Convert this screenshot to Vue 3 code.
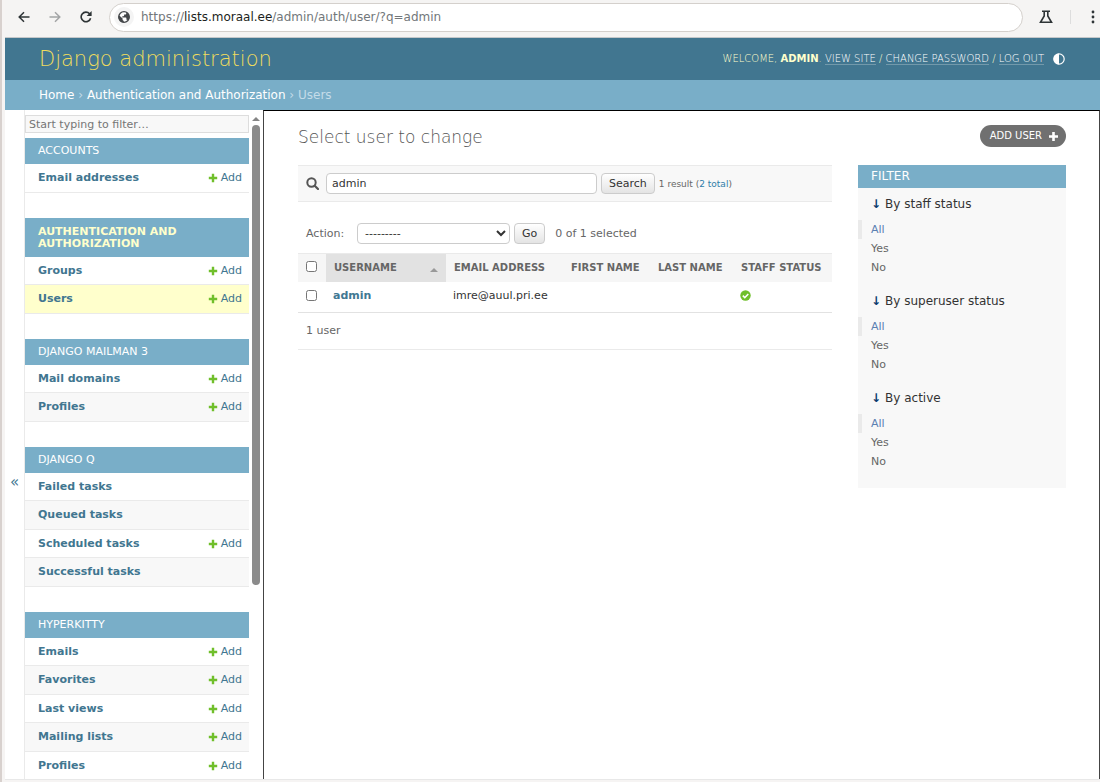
<script setup>
import { ref } from 'vue'

const query = ref('admin')
const navFilter = ref('')
const action = ref('')

const groups = [
  { name: 'Accounts', items: [{ name: 'Email addresses', add: true }] },
  {
    name: 'Authentication and Authorization',
    current: true,
    items: [
      { name: 'Groups', add: true },
      { name: 'Users', add: true, current: true },
    ],
  },
  {
    name: 'Django Mailman 3',
    items: [
      { name: 'Mail domains', add: true },
      { name: 'Profiles', add: true },
    ],
  },
  {
    name: 'Django Q',
    items: [
      { name: 'Failed tasks' },
      { name: 'Queued tasks' },
      { name: 'Scheduled tasks', add: true },
      { name: 'Successful tasks' },
    ],
  },
  {
    name: 'HyperKitty',
    items: [
      { name: 'Emails', add: true },
      { name: 'Favorites', add: true },
      { name: 'Last views', add: true },
      { name: 'Mailing lists', add: true },
      { name: 'Profiles', add: true },
    ],
  },
]

const filters = ['By staff status', 'By superuser status', 'By active']
const choices = ['All', 'Yes', 'No']
</script>

<template>
  <div class="window">
    <div class="toolbar">
      <button class="tool" type="button" aria-label="Back">
        <svg width="12" height="12" viewBox="0 0 12 12"><path d="M11.5 6H1.2M6 1.2 1.2 6 6 10.8" fill="none" stroke="#2e3436" stroke-width="1.5" /></svg>
      </button>
      <button class="tool" type="button" aria-label="Forward">
        <svg width="12" height="12" viewBox="0 0 12 12"><path d="M.5 6h10.3M6 1.2 10.8 6 6 10.8" fill="none" stroke="#a3a5a6" stroke-width="1.5" /></svg>
      </button>
      <button class="tool" type="button" aria-label="Reload">
        <svg width="12" height="12" viewBox="0 0 12 12"><path d="M10.6 7.2A4.8 4.8 0 1 1 9.6 2.8L10.6 4" fill="none" stroke="#2e3436" stroke-width="1.6" /><path d="M11.6 0v5H6.6Z" fill="#2e3436" /></svg>
      </button>
      <div class="address">
        <span class="globe">
          <svg width="12" height="12" viewBox="0 0 12 12"><circle cx="6" cy="6" r="5.3" fill="#fff" stroke="#44474a" stroke-width="1.3" /><path d="M1 4.2 4.6 7.6V9l1.2 1v1.4C3 11.6.6 9.4.6 6ZM7.8.9C10 1.6 11.4 3.7 11.4 6c0 1.3-.5 2.6-1.3 3.5-.2-.5-.6-.8-1.1-.8h-.6V7c0-.3-.2-.6-.6-.6H4.3V5.2h1.2c.3 0 .6-.3.6-.6V3.5h1.1c.6 0 1.1-.5 1.1-1.1Z" fill="#44474a" /></svg>
        </span>
        <span class="url">https://<b>lists.moraal.ee</b>/admin/auth/user/?q=admin</span>
      </div>
      <button class="tool flask" type="button" aria-label="Experiments">
        <svg width="14" height="14" viewBox="0 0 14 14"><path d="M3 1.2h8M5.2 1.2V6L1.5 12.3h11L8.8 6V1.2" fill="none" stroke="#2e3436" stroke-width="1.6" /></svg>
      </button>
      <span class="divider"></span>
      <button class="tool menu" type="button" aria-label="Menu">
        <svg width="4" height="14" viewBox="0 0 4 14" fill="#2e3436"><circle cx="2" cy="2" r="1.4" /><circle cx="2" cy="7" r="1.4" /><circle cx="2" cy="12" r="1.4" /></svg>
      </button>
    </div>

    <header class="header">
      <a class="brand" href="#">Django administration</a>
      <div class="usertools">
        <span>Welcome, <strong>admin</strong>.
          <a href="#">View site</a> / <a href="#">Change password</a> / <a href="#">Log out</a></span>
        <button class="theme" type="button" aria-label="Toggle theme">
          <svg width="12" height="12" viewBox="0 0 12 12"><circle cx="6" cy="6" r="5.2" fill="none" stroke="#fff" stroke-width="1.2" /><path d="M6 .6a5.4 5.4 0 0 0 0 10.8Z" fill="#fff" /></svg>
        </button>
      </div>
    </header>

    <nav class="crumbs" aria-label="Breadcrumbs">
      <a href="#">Home</a> › <a href="#">Authentication and Authorization</a> › Users
    </nav>

    <div class="body">
      <button class="collapse" type="button" aria-label="Toggle navigation">«</button>
      <nav class="sidebar" aria-label="Sidebar">
        <input v-model="navFilter" class="navfilter" type="search" placeholder="Start typing to filter…" aria-label="Filter navigation items">
        <section v-for="g in groups" :key="g.name" class="group">
          <h2 :class="{ current: g.current }"><a href="#">{{ g.name }}</a></h2>
          <div v-for="i in g.items" :key="i.name" class="item" :class="{ current: i.current }">
            <a class="model" href="#">{{ i.name }}</a>
            <a v-if="i.add" class="add" href="#">
              <svg width="10" height="10" viewBox="0 0 10 10"><path d="M5 .8v8.4M.8 5h8.4" stroke="#70bf2b" stroke-width="2.4" /></svg>Add</a>
          </div>
        </section>
      </nav>
      <div class="scroll" aria-hidden="true">
        <svg width="8" height="5" viewBox="0 0 8 5"><path d="M0 5 4 1l4 4Z" fill="#858585" /></svg>
        <div class="thumb"></div>
      </div>

      <main class="main">
        <div class="titlebar">
          <h1>Select user to change</h1>
          <a class="adduser" href="#">Add user
            <svg width="9" height="9" viewBox="0 0 9 9"><path d="M4.5 0v9M0 4.5h9" stroke="#fff" stroke-width="2.6" /></svg></a>
        </div>
        <div class="columns">
          <div class="changelist">
            <form class="search" @submit.prevent>
              <label for="searchbar" aria-label="Search">
                <svg width="13" height="13" viewBox="0 0 13 13"><circle cx="5.5" cy="5.5" r="4.2" fill="none" stroke="#555" stroke-width="2" /><path d="m8.7 8.7 3.300 3.300" stroke="#555" stroke-width="2.2" stroke-linecap="round" /></svg>
              </label>
              <input id="searchbar" v-model="query" type="text">
              <button type="submit">Search</button>
              <span class="count">1 result (<a href="#">2 total</a>)</span>
            </form>
            <form class="actions" @submit.prevent>
              <label for="action">Action:</label>
              <select id="action" v-model="action">
                <option value="">---------</option>
                <option value="delete">Delete selected users</option>
              </select>
              <button type="submit">Go</button>
              <span class="picked">0 of 1 selected</span>
            </form>
            <table>
              <thead>
                <tr>
                  <th class="check"><input type="checkbox" aria-label="Select all users"></th>
                  <th class="sorted"><div><a href="#">Username</a><svg width="8" height="4" viewBox="0 0 8 4"><path d="M0 4 4 0l4 4Z" fill="#999" /></svg></div></th>
                  <th class="email"><a href="#">Email address</a></th>
                  <th class="first"><a href="#">First name</a></th>
                  <th class="last"><a href="#">Last name</a></th>
                  <th><a href="#">Staff status</a></th>
                </tr>
              </thead>
              <tbody>
                <tr>
                  <td class="check"><input type="checkbox" aria-label="Select admin"></td>
                  <td><a class="user" href="#">admin</a></td>
                  <td>imre@auul.pri.ee</td>
                  <td></td>
                  <td></td>
                  <td><svg role="img" aria-label="True" width="11" height="11" viewBox="0 0 11 11"><circle cx="5.5" cy="5.5" r="5.2" fill="#70bf2b" /><path d="m2.8 5.6 2 2 3.5-3.6" fill="none" stroke="#fff" stroke-width="1.5" /></svg></td>
                </tr>
              </tbody>
            </table>
            <p class="paginator">1 user</p>
          </div>

          <aside class="filter">
            <h2>Filter</h2>
            <details v-for="f in filters" :key="f" open>
              <summary>{{ f }}</summary>
              <ul>
                <li v-for="(c, n) in choices" :key="c" :class="{ selected: n === 0 }"><a href="#">{{ c }}</a></li>
              </ul>
            </details>
          </aside>
        </div>
      </main>
    </div>
  </div>
</template>

<style>
body {
  background: #fff;
}
</style>

<style scoped>
* {
  box-sizing: border-box;
}

.window {
  display: flex;
  flex-direction: column;
  height: 100vh;
  overflow: hidden;
  padding: 0 0 2px 3px;
  border-left: 2px solid #d8d1ce;
  background: #f6f4f3;
  color: #333;
  font: 12px/16px "DejaVu Sans", sans-serif;
}

a {
  color: inherit;
  text-decoration: none;
}

button,
input,
select {
  font: inherit;
  color: inherit;
}

button {
  cursor: pointer;
}

svg {
  flex: none;
}

.toolbar {
  display: flex;
  flex: none;
  align-items: center;
  height: 38px;
  padding: 0 5px 3px 11px;
  background: #f5f4f3;
  border-bottom: 1px solid #c5c8ca;
}

.tool {
  display: flex;
  justify-content: center;
  width: 15px;
  margin-right: 16px;
  padding: 0;
  border: 0;
  background: none;
}

.address {
  display: flex;
  flex: 1;
  align-items: center;
  gap: 7px;
  height: 29px;
  padding: 0 4px;
  border: 1px solid #d4d0cc;
  border-radius: 15px;
  background: #fff;
}

.globe {
  display: flex;
  align-items: center;
  justify-content: center;
  width: 20px;
  height: 20px;
  border-radius: 50%;
  background: #f4f4f4;
}

.url {
  color: #72777a;
}

.url b {
  color: #1c1f21;
  font-weight: 400;
}

.flask {
  margin: 0 0 0 15px;
}

.divider {
  width: 1px;
  height: 14px;
  margin: 0 20px 0 17px;
  background: #ddd;
}

.menu {
  width: 4px;
  margin: 0;
}

.header {
  display: flex;
  flex: none;
  align-items: center;
  justify-content: space-between;
  height: 42px;
  padding: 0 35px 0 34px;
  background: #417690;
  color: #ffc;
}

.brand {
  color: #f0dd5d;
  font-size: 21px;
  font-weight: 200;
  line-height: 28px;
}

.usertools {
  display: flex;
  align-items: center;
  gap: 9px;
  font-size: 10px;
  font-weight: 200;
  text-transform: uppercase;
}

.usertools strong {
  font-weight: 700;
}

.usertools a {
  border-bottom: 1px solid #7299ab;
  color: #fff;
}

.theme {
  display: flex;
  padding: 0;
  border: 0;
  background: none;
}

.crumbs {
  flex: none;
  height: 30px;
  padding: 7px 34px;
  background: #79aec8;
  color: #c4dce8;
}

.crumbs a {
  color: #fff;
}

.body {
  display: flex;
  flex: 1;
  min-height: 0;
  border-bottom: 1px solid #e8e8e8;
  background: #fff;
}

.collapse {
  flex: none;
  width: 19px;
  padding: 74px 0 0;
  border: 0;
  background: #fff;
  color: #417690;
  font-size: 15px;
}

.sidebar {
  flex: none;
  width: 225px;
  overflow: hidden;
  padding-top: 5px;
  border-left: 1px solid #eaeaea;
}

.navfilter {
  display: block;
  width: 100%;
  height: 18px;
  margin: 0 0 5px;
  padding: 0 3px;
  border: 1px solid #ddd;
  border-radius: 0;
  outline: 0;
  appearance: none;
  background: #f8f8f8;
  font-size: 11px;
}

.navfilter::placeholder {
  color: #757575;
  opacity: 1;
}

.group {
  margin-bottom: 25px;
}

.group h2 {
  margin: 0;
  padding: 7px 13px;
  background: #79aec8;
  color: #fff;
  font-size: 11px;
  font-weight: 400;
  line-height: 12px;
  text-transform: uppercase;
}

.group h2.current {
  padding: 8px 13px 7px;
  color: #ffc;
  font-weight: 700;
}

.item {
  display: flex;
  align-items: center;
  justify-content: space-between;
  height: 28px;
  padding: 0 7px 0 13px;
  border-bottom: 1px solid #eaeaea;
  color: #417690;
  font-size: 11px;
}

.item:nth-of-type(even) {
  background: #f8f8f8;
}

.item:nth-of-type(even),
.item:last-child {
  height: 29px;
}

.item.current {
  background: #ffc;
}

.model {
  font-weight: 700;
}

.add {
  display: flex;
  align-items: center;
  gap: 3px;
}

.scroll {
  display: flex;
  flex: none;
  flex-direction: column;
  align-items: center;
  gap: 4px;
  width: 14px;
  padding-top: 6px;
}

.thumb {
  width: 8px;
  height: 460px;
  border-radius: 4px;
  background: #8b8b8b;
}

.main {
  flex: 1;
  min-width: 0;
  padding: 14px 33px 0 34px;
  border: 1px solid #444;
  border-top-color: #000;
  border-bottom: 0;
}

.titlebar {
  display: flex;
  align-items: flex-start;
  justify-content: space-between;
  height: 40px;
}

h1 {
  margin: 0;
  color: #555;
  font-size: 17px;
  font-weight: 200;
  line-height: 25px;
}

.adduser {
  display: flex;
  align-items: center;
  gap: 7px;
  height: 22px;
  padding: 0 8px 0 10px;
  border-radius: 11px;
  background: #707070;
  color: #fff;
  font-size: 10px;
  text-transform: uppercase;
}

.columns {
  display: flex;
  align-items: flex-start;
  gap: 26px;
}

.changelist {
  flex: 1;
  min-width: 0;
  color: #666;
}

.search {
  display: flex;
  align-items: center;
  gap: 4px;
  height: 37px;
  padding: 0 8px;
  border: solid #eaeaea;
  border-width: 1px 0;
  background: #f8f8f8;
}

.search label {
  display: flex;
  width: 16px;
}

.search input {
  width: 271px;
  height: 21px;
  padding: 0 5px;
  border: 1px solid #ccc;
  border-radius: 4px;
  background: #fff;
  color: #333;
  font-size: 11px;
}

.changelist button {
  height: 21px;
  padding: 0 7px;
  border: 1px solid #ccc;
  border-radius: 4px;
  background: linear-gradient(#fff, #e4e4e4);
  color: #333;
  font-size: 11px;
}

.count {
  font-size: 9px;
}

.count a {
  color: #2f7da8;
}

.actions {
  display: flex;
  align-items: center;
  gap: 4px;
  padding: 21px 8px 9px;
  font-size: 11px;
}

.actions label {
  width: 47px;
}

.actions select {
  width: 153px;
  height: 21px;
  padding: 0 3px;
  border: 1px solid #ccc;
  border-radius: 4px;
  background: #fff;
  color: #333;
  font-size: 11px;
}

.picked {
  margin-left: 6px;
}

table {
  width: 100%;
  border-collapse: collapse;
  table-layout: fixed;
}

th {
  height: 28px;
  padding: 0 8px;
  border-top: 1px solid #eaeaea;
  background: #f6f6f6;
  color: #666;
  font-size: 10px;
  text-align: left;
  text-transform: uppercase;
  white-space: nowrap;
}

th div {
  display: flex;
  align-items: center;
  justify-content: space-between;
}

th svg {
  margin-top: 4px;
}

td {
  height: 31px;
  padding: 0 7px 2px;
  border-bottom: 1px solid #e2e2e2;
  color: #333;
  font-size: 11px;
}

td svg {
  display: block;
}

.check {
  width: 28px;
  padding: 0 8px 2px;
}

.check input {
  display: block;
  width: 11px;
  height: 11px;
  margin: 0;
}

.sorted {
  width: 120px;
  background: #e2e2e2;
}

.email {
  width: 117px;
}

.first {
  width: 87px;
}

.last {
  width: 83px;
}

.user {
  color: #417893;
  font-weight: 700;
}

.paginator {
  margin: 0;
  padding: 10px 8px;
  border-bottom: 1px solid #eaeaea;
  font-size: 11px;
}

.filter {
  flex: none;
  width: 208px;
  padding-bottom: 9px;
  background: #f8f8f8;
}

.filter h2 {
  margin: 0;
  padding: 3px 13px 4px;
  background: #79aec8;
  color: #fff;
  font-size: 12px;
  font-weight: 400;
  text-transform: uppercase;
}

summary {
  padding: 8px 13px;
  list-style: none;
  font-size: 12px;
}

summary::before {
  content: "↓";
  margin-right: 4px;
  color: #0c3c6e;
  font-weight: 700;
}

.filter ul {
  margin: 0;
  padding: 0 0 8px;
  list-style: none;
}

.filter li {
  height: 19px;
  padding-left: 13px;
  color: #666;
  font-size: 11px;
  line-height: 19px;
}

.filter .selected {
  padding-left: 9px;
  border-left: 4px solid #eaeaea;
  color: #5b80b2;
}
</style>
